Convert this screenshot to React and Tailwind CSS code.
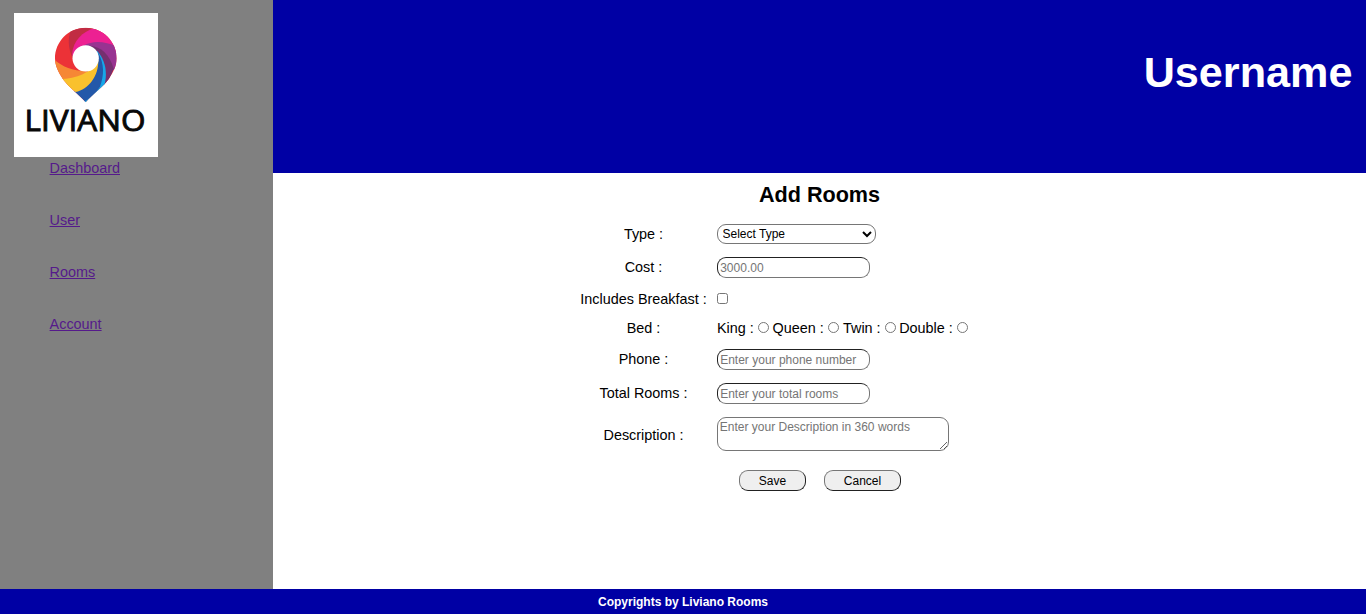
import React from 'react';

const links = ['Dashboard', 'User', 'Rooms', 'Account'];
const beds = [
  { name: 'King', style: 'w-[55.5px]' },
  { name: 'Queen', style: 'w-[70.5px]' },
  { name: 'Twin', style: 'w-[56.2px]' },
  { name: 'Double', style: 'w-[70px]' },
];

const inputStyle =
  'block h-[21px] w-[153px] rounded-[9px] border border-[#767676] bg-white px-[2.2px] text-xs leading-[15px] [border-style:inset] placeholder:text-[#757575]';
const buttonStyle =
  'h-[21px] rounded-[9px] border border-[#767676] bg-[#efefef] text-center text-xs leading-[15px] text-black [border-style:outset]';

function Logo() {
  return (
    <svg className="block h-36 w-36 bg-white" viewBox="0 0 144 144">
      <defs>
        <clipPath id="pin">
          <path d="M122 23C70 23 30 65 30 115C30 138 41 158 53 176C70 201 98 219 122 247C146 219 174 201 192 176C204 158 215 138 215 115C215 65 174 23 122 23Z" />
        </clipPath>
      </defs>
      <g transform="translate(31 7) scale(.33333)">
        <g clipPath="url(#pin)">
          <rect x="25" y="20" width="195" height="230" fill="#ec3237" />
          <path fill="#c12c43" d="M82 18C65 55 69 90 88 125L122 115L160 22L130 18Z" />
          <path fill="#ec2192" d="M150 24C112 35 84 61 81 105L122 125L220 100V15Z" />
          <path fill="#983391" d="M115 77C145 61 180 63 220 82V150L180 150L122 110Z" />
          <path fill="#74306f" d="M135 77C168 80 193 102 206 146L182 205L145 130Z" />
          <path fill="#16a7e8" d="M156 92C180 118 189 156 178 196L115 260L140 130Z" />
          <path fill="#2358a9" d="M160 100C178 132 178 165 165 200C150 222 135 234 119 244L85 216L145 130Z" />
          <path fill="#f68735" d="M28 119C51 139 80 152 125 154L145 164L52 184L25 160Z" />
          <path fill="#f9c12d" d="M45 177C95 177 139 158 160 120C161 170 130 208 92 216L48 190Z" />
        </g>
        <circle cx="122" cy="115" r="39.5" fill="#fff" />
      </g>
      <text
        x="10.5"
        y="118"
        textLength="121"
        lengthAdjust="spacingAndGlyphs"
        fill="#080808"
        stroke="#080808"
        strokeWidth=".9"
        fontFamily="'Open Sans', 'Noto Sans', sans-serif"
        fontSize="30"
      >
        LIVIANO
      </text>
    </svg>
  );
}

function Row({ label, height, labelStyle = '', children }) {
  return (
    <div className={`flex items-center ${height}`}>
      <div className={`mr-[10px] w-[127px] text-center whitespace-nowrap ${labelStyle}`}>{label} :</div>
      {children}
    </div>
  );
}

export default function App() {
  return (
    <div className="flex h-[614px] w-full flex-col bg-white font-['Liberation_Sans',Arial,sans-serif] text-[14.4px] leading-4 text-black">
      <div className="flex min-h-0 flex-1">
        <aside className="w-[273px] shrink-0 bg-[#808080] pt-[13px] pl-[14px]">
          <Logo />
          <nav className="mt-[3px] flex flex-col items-start gap-9 pl-[35.6px]">
            {links.map((link) => (
              <a key={link} href="#" className="text-[#551a8b] underline">
                {link}
              </a>
            ))}
          </nav>
        </aside>
        <div className="flex min-w-0 flex-1 flex-col">
          <header className="flex h-[173px] justify-end bg-[#0000a4] pt-12 pr-[13.5px]">
            <h1 className="text-[43.2px] leading-[49px] font-bold text-white">Username</h1>
          </header>
          <main>
            <h2 className="flex h-[44px] items-center justify-center text-[21.6px] leading-6 font-bold">Add Rooms</h2>
            <form className="pl-[307px]">
              <Row label="Type" height="h-[34px]">
                <select className="h-5 w-[159px] rounded-[9px] border border-[#767676] bg-white pl-[0.5px] text-xs">
                  <option>Select Type</option>
                </select>
              </Row>
              <Row label="Cost" height="h-[33px]" labelStyle="pb-0.5">
                <input className={inputStyle} placeholder="3000.00" />
              </Row>
              <Row label="Includes Breakfast" height="h-[30px]">
                <input type="checkbox" className="mb-px size-[11px]" />
              </Row>
              <Row label="Bed" height="h-7">
                {beds.map((bed) => (
                  <label key={bed.name} className={`flex items-center gap-1 whitespace-nowrap ${bed.style}`}>
                    {bed.name} :
                    <input type="radio" name="bed" className="mb-px size-[11px] shrink-0" />
                  </label>
                ))}
              </Row>
              <Row label="Phone" height="h-[35px]" labelStyle="pb-0.5">
                <input className={inputStyle} placeholder="Enter your phone number" />
              </Row>
              <Row label="Total Rooms" height="h-[33px]" labelStyle="pb-0.5">
                <input className={inputStyle} placeholder="Enter your total rooms" />
              </Row>
              <Row label="Description" height="h-12" labelStyle="pt-0.5">
                <textarea
                  className="block h-[34px] w-[232px] rounded-[9px] border border-[#767676] bg-white px-[1.8px] py-[1.8px] text-xs leading-[14px] placeholder:text-[#757575]"
                  placeholder="Enter your Description in 360 words"
                />
              </Row>
              <div className="flex h-[45px] items-center gap-[18px] pl-[159px]">
                <button type="button" className={`${buttonStyle} w-[67px] pt-px`}>Save</button>
                <button type="button" className={`${buttonStyle} w-[77px] pt-px`}>Cancel</button>
              </div>
            </form>
          </main>
        </div>
      </div>
      <footer className="flex h-[25px] items-center justify-center bg-[#0000a4] text-xs font-bold text-white">
        Copyrights by Liviano Rooms
      </footer>
    </div>
  );
}
